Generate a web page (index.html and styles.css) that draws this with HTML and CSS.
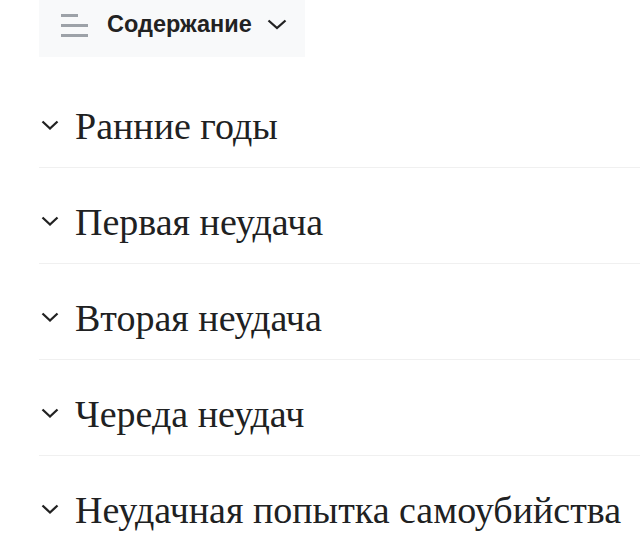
FILE: index.html
```html
<!DOCTYPE html>
<html lang="ru">
<head>
<meta charset="utf-8">
<link rel="stylesheet" href="styles.css">
</head>
<body>
<div class="page">
  <div class="toc-toggle">
    <svg class="burger" width="28" height="24" viewBox="0 0 28 24">
      <rect x="0" y="0" width="17" height="3" fill="#9da2a8"/>
      <rect x="0" y="10" width="27" height="3" fill="#9da2a8"/>
      <rect x="0" y="20" width="27" height="3" fill="#9da2a8"/>
    </svg>
    <span class="toc-title">Содержание</span>
    <svg class="toc-chev" width="20" height="11" viewBox="0 0 20 11">
      <path d="M1.5 1.5 L10 9 L18.5 1.5" fill="none" stroke="#222" stroke-width="2.3"/>
    </svg>
  </div>
  <ul class="sections">
    <li class="section"><svg class="chev" width="18" height="11" viewBox="0 0 18 11"><path d="M1.5 1.5 L9 8.5 L16.5 1.5" fill="none" stroke="#222" stroke-width="2.3"/></svg><span>Ранние годы</span></li>
    <li class="section"><svg class="chev" width="18" height="11" viewBox="0 0 18 11"><path d="M1.5 1.5 L9 8.5 L16.5 1.5" fill="none" stroke="#222" stroke-width="2.3"/></svg><span>Первая неудача</span></li>
    <li class="section"><svg class="chev" width="18" height="11" viewBox="0 0 18 11"><path d="M1.5 1.5 L9 8.5 L16.5 1.5" fill="none" stroke="#222" stroke-width="2.3"/></svg><span>Вторая неудача</span></li>
    <li class="section"><svg class="chev" width="18" height="11" viewBox="0 0 18 11"><path d="M1.5 1.5 L9 8.5 L16.5 1.5" fill="none" stroke="#222" stroke-width="2.3"/></svg><span>Череда неудач</span></li>
    <li class="section"><svg class="chev" width="18" height="11" viewBox="0 0 18 11"><path d="M1.5 1.5 L9 8.5 L16.5 1.5" fill="none" stroke="#222" stroke-width="2.3"/></svg><span>Неудачная попытка самоубийства</span></li>
  </ul>
</div>
</body>
</html>
```
FILE: styles.css
```css
html, body {
  margin: 0;
  padding: 0;
  background: #fff;
}
.page {
  padding-left: 39px;
  width: 601px;
  height: 542px;
  overflow: hidden;
}
.toc-toggle {
  display: flex;
  align-items: center;
  width: 266px;
  height: 57px;
  box-sizing: border-box;
  padding-left: 22px;
  padding-bottom: 8px;
  background: #f8f9fa;
}
.burger {
  flex: none;
  margin-top: 3px;
}
.toc-title {
  margin-left: 18px;
  font-family: "Liberation Sans", Arial, sans-serif;
  font-weight: bold;
  font-size: 23.5px;
  color: #222;
}
.toc-chev {
  margin-left: 15px;
  margin-top: -1px;
}
.sections {
  list-style: none;
  margin: 15px 0 0 0;
  padding: 0;
}
.section {
  display: flex;
  align-items: center;
  height: 43px;
  padding: 33px 0 19px 0;
  border-bottom: 1px solid #f0f0f0;
  font-family: "Liberation Serif", "Times New Roman", serif;
  font-size: 38px;
  line-height: 43px;
  color: #202122;
}
.chev {
  flex: none;
  margin-left: 2px;
  margin-right: 16px;
  margin-top: -3px;
}
```
